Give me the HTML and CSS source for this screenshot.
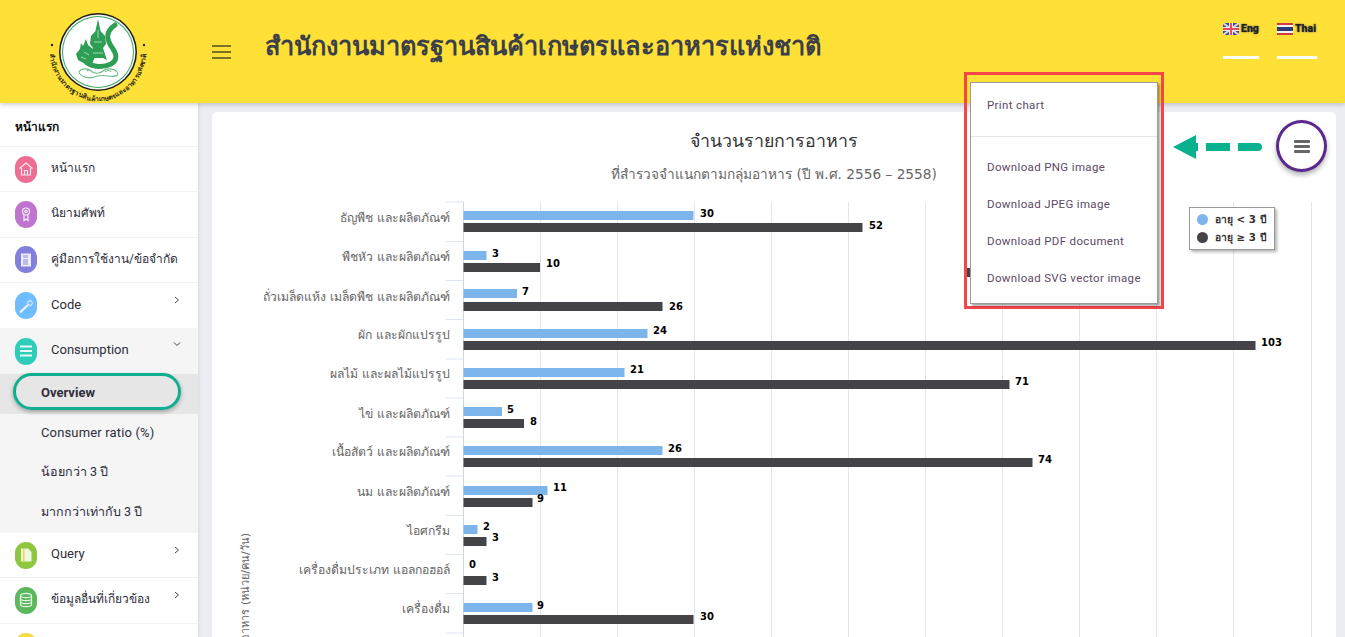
FILE: index.html
```html
<!DOCTYPE html>
<html lang="th">
<head>
<meta charset="utf-8">
<title>Overview</title>
<link rel="stylesheet" href="styles.css">
</head>
<body>
<header class="topbar">
  <div class="logo-cell">
    <svg class="logo" viewBox="0 0 110 97" width="110" height="97">
      <defs><path id="ring" d="M7 45 A48 50 0 0 0 103 45"/></defs>
      <circle cx="55" cy="46" r="39" fill="#1c1c14"/>
      <circle cx="55" cy="46" r="37.500" fill="#f6f6ee"/>
      <circle cx="55" cy="46" r="36" fill="#37a565"/>
      <circle cx="55" cy="46" r="35" fill="#fff"/>
      <path class="naga-line" d="M72 19C62 26 64 33 68 40C74 48 75 54 68 58C60 62 50 61 44 57"/>
      <path class="naga" d="M55 13l2.500 12 4.500 5 1 8-3 4 4 12-4-2H50l-4 2 4-12-3-4 1-8 4.500-5z"/>
      <path class="naga" d="M43 33l2 6 5 4 2 8-3 7-5 1-9-5-2-6 4-5 1-6 2 3z"/>
      <path class="naga-cut" d="M55 24v8M51 36h8M50 47h10M41 46l5 3M38 51l5 2"/>
      <path class="cloud" d="M36 66c2-4 9-4 12-1s9 3 12 0 11-3 14 1-3 5-9 4-10-1-14 1-14 0-15-5zM44 65c2-2 4-1 5 1M62 66c2-2 5-2 6 0"/>
      <circle cx="9" cy="39" r="1.200" fill="#222"/>
      <circle cx="101" cy="39" r="1.200" fill="#222"/>
      <text class="logo-text"><textPath href="#ring" startOffset="50%" text-anchor="middle">สำนักงานมาตรฐานสินค้าเกษตรและอาหารแห่งชาติ</textPath></text>
    </svg>
  </div>
  <button class="burger" aria-label="menu"><i></i><i></i><i></i></button>
  <h1 class="site-title">สำนักงานมาตรฐานสินค้าเกษตรและอาหารแห่งชาติ</h1>
  <nav class="langs">
    <a class="lang lang-en">
      <span class="lang-row">
        <svg width="16" height="12" viewBox="0 0 16 12"><rect width="16" height="12" fill="#34508f"/><path d="M0 0l16 12M16 0L0 12" stroke="#e6d5dc" stroke-width="2"/><path d="M8 0v12M0 6h16" stroke="#efe4e8" stroke-width="4"/><path d="M8 0v12M0 6h16" stroke="#dc4f66" stroke-width="2"/></svg>
        <b>Eng</b>
      </span>
    </a>
    <a class="lang lang-th">
      <span class="lang-row">
        <svg width="16" height="12" viewBox="0 0 16 12"><rect width="16" height="12" fill="#d13b44"/><rect y="2" width="16" height="8" fill="#f4f4f4"/><rect y="4" width="16" height="4" fill="#2d3a78"/></svg>
        <b>Thai</b>
      </span>
    </a>
  </nav>
</header>
<div class="shell">
  <aside class="sidebar">
    <div class="side-head">หน้าแรก</div>
    <a class="item line th"><span class="ic ic-pink"><svg viewBox="0 0 16 16" width="16" height="16"><path d="M1.500 7.500L8 2l6.500 5.500M3.500 7v7h9V7M6.500 14V9.500h3V14" /></svg></span><span class="lbl">หน้าแรก</span></a>
    <a class="item line th"><span class="ic ic-purple"><svg viewBox="0 0 16 16" width="16" height="16"><circle cx="8" cy="5.500" r="3.500"/><circle cx="8" cy="5.500" r="1.200"/><path d="M6 9v5.500l2-1.500 2 1.500V9"/></svg></span><span class="lbl">นิยามศัพท์</span></a>
    <a class="item line th"><span class="ic ic-indigo"><svg viewBox="0 0 16 16" width="16" height="16"><path class="fill" d="M3 1.500h10v13H3z"/><path class="cut" d="M5 3h5v3H5zM5 7h5v6H5z"/></svg></span><span class="lbl">คู่มือการใช้งาน/ข้อจำกัด</span></a>
    <a class="item"><span class="ic ic-blue"><svg viewBox="0 0 16 16" width="16" height="16"><path class="thick" d="M2 14.500L10 7"/><path d="M12 1.500v2M12 6.500v2M8.500 5h2M13.500 5h2M9.800 2.800l1 1M14.200 2.800l-1 1M9.800 7.200l1-1M14.200 7.200l-1-1"/></svg></span><span class="lbl">Code</span><svg class="chev" viewBox="0 0 8 8" width="8" height="8"><path d="M2 1l3.500 3L2 7"/></svg></a>
    <div class="group">
      <a class="item open"><span class="ic ic-teal"><svg viewBox="0 0 16 16" width="16" height="16"><path class="thick" d="M2 3.500h12M2 8h12M2 12.500h12"/></svg></span><span class="lbl">Consumption</span><svg class="chev chev-down" viewBox="0 0 8 8" width="8" height="8"><path d="M1 2.500l3 3 3-3"/></svg></a>
      <a class="sub sub-active">Overview</a>
      <a class="sub">Consumer ratio (%)</a>
      <a class="sub sub-th">น้อยกว่า 3 ปี</a>
      <a class="sub sub-th">มากกว่าเท่ากับ 3 ปี</a>
    </div>
    <a class="item line"><span class="ic ic-lime"><svg viewBox="0 0 16 16" width="16" height="16"><path class="fill" d="M3 1.500h7l3.500 3.500v9.500H3z"/><path class="amber" d="M5 1.500h1.500v13H5z"/></svg></span><span class="lbl">Query</span><svg class="chev" viewBox="0 0 8 8" width="8" height="8"><path d="M2 1l3.500 3L2 7"/></svg></a>
    <a class="item line th"><span class="ic ic-green"><svg viewBox="0 0 16 16" width="16" height="16"><ellipse cx="8" cy="3.500" rx="5.500" ry="2.200"/><path d="M2.500 3.500v9c0 1.200 2.500 2.200 5.500 2.200s5.500-1 5.500-2.200v-9M2.500 6.500c0 1.200 2.500 2.200 5.500 2.200s5.500-1 5.500-2.200M2.500 9.500c0 1.200 2.500 2.200 5.500 2.200s5.500-1 5.500-2.200"/></svg></span><span class="lbl">ข้อมูลอื่นที่เกี่ยวข้อง</span><svg class="chev" viewBox="0 0 8 8" width="8" height="8"><path d="M2 1l3.500 3L2 7"/></svg></a>
    <a class="item"><span class="ic ic-yellow"></span></a>
  </aside>
  <main class="content">
    <section class="card">
      <svg class="chart" viewBox="0 0 1124 525" width="1124" height="525">
        <g class="grid">
          <path d="M328.500 90V525"/><path d="M405.500 90V525"/><path d="M482.500 90V525"/><path d="M559.500 90V525"/><path d="M636.500 90V525"/><path d="M713.500 90V525"/><path d="M790.500 90V525"/><path d="M867.500 90V525"/><path d="M944.500 90V525"/><path d="M1021.500 90V525"/><path d="M1099.500 90V525"/>
        </g>
        <path class="axis" d="M251.500 90V525"/>
        <g class="ticks">
          <path d="M234 90h17M234 129.500h17M234 168.500h17M234 207.500h17M234 247h17M234 286h17M234 325h17M234 364h17M234 403.500h17M234 442.500h17M234 481.500h17M234 521h17"/>
        </g>
        <text class="ch-title" x="562" y="35" text-anchor="middle">จำนวนรายการอาหาร</text>
        <text class="ch-sub" x="562" y="67" text-anchor="middle">ที่สำรวจจำแนกตามกลุ่มอาหาร (ปี พ.ศ. 2556 – 2558)</text>
        <g class="cats" text-anchor="end">
          <text x="238" y="110">ธัญพืช และผลิตภัณฑ์</text>
          <text x="238" y="149">พืชหัว และผลิตภัณฑ์</text>
          <text x="238" y="189">ถั่วเมล็ดแห้ง เมล็ดพืช และผลิตภัณฑ์</text>
          <text x="238" y="227">ผัก และผักแปรรูป</text>
          <text x="238" y="266">ผลไม้ และผลไม้แปรรูป</text>
          <text x="238" y="306">ไข่ และผลิตภัณฑ์</text>
          <text x="238" y="344">เนื้อสัตว์ และผลิตภัณฑ์</text>
          <text x="238" y="384">นม และผลิตภัณฑ์</text>
          <text x="238" y="423">ไอศกรีม</text>
          <text x="238" y="462">เครื่องดื่มประเภท แอลกอฮอล์</text>
          <text x="238" y="501">เครื่องดื่ม</text>
        </g>
        <text class="y-title" text-anchor="end" transform="translate(37 421) rotate(-90)">ปริมาณอาหาร (หน่วย/คน/วัน)</text>
        <g class="b1">
          <rect x="251.500" y="99" width="230" height="9"/>
          <rect x="251.500" y="139" width="23" height="9"/>
          <rect x="251.500" y="177" width="53.500" height="9"/>
          <rect x="251.500" y="217" width="184" height="9"/>
          <rect x="251.500" y="256" width="161" height="9"/>
          <rect x="251.500" y="295" width="38.500" height="9"/>
          <rect x="251.500" y="334" width="199" height="9"/>
          <rect x="251.500" y="374" width="84" height="9"/>
          <rect x="251.500" y="413" width="14" height="9"/>
          <rect x="251.500" y="491" width="69" height="9"/>
        </g>
        <g class="b2">
          <rect x="251.500" y="111" width="399" height="9"/>
          <rect x="251.500" y="151" width="76.500" height="9"/>
          <rect x="251.500" y="190" width="199" height="9"/>
          <rect x="251.500" y="229" width="792" height="9"/>
          <rect x="251.500" y="268" width="546" height="9"/>
          <rect x="251.500" y="307" width="60.500" height="9"/>
          <rect x="251.500" y="346" width="569" height="9"/>
          <rect x="251.500" y="386" width="69" height="9"/>
          <rect x="251.500" y="425" width="23" height="9"/>
          <rect x="251.500" y="464" width="23" height="9"/>
          <rect x="251.500" y="503" width="230" height="9"/>
          <rect x="754" y="156" width="4" height="9"/>
        </g>
        <g class="vals">
          <text x="488" y="105">30</text><text x="657" y="117">52</text>
          <text x="280" y="145">3</text><text x="334" y="155">10</text>
          <text x="310" y="183">7</text><text x="457" y="198">26</text>
          <text x="441" y="222">24</text><text x="1049" y="234">103</text>
          <text x="418" y="261">21</text><text x="803" y="273">71</text>
          <text x="295" y="301">5</text><text x="318" y="313">8</text>
          <text x="456" y="340">26</text><text x="826" y="351">74</text>
          <text x="341" y="379">11</text><text x="325" y="390">9</text>
          <text x="271" y="418">2</text><text x="280" y="429">3</text>
          <text x="257" y="456">0</text><text x="280" y="469">3</text>
          <text x="325" y="497">9</text><text x="488" y="508">30</text>
        </g>
      </svg>
      <div class="legend">
        <div class="leg-row"><i class="dot dot-blue"></i>อายุ &lt; 3 ปี</div>
        <div class="leg-row"><i class="dot dot-dark"></i>อายุ ≥ 3 ปี</div>
      </div>
      <svg class="arrow" viewBox="0 0 92 24" width="92" height="24"><path d="M1 12L24 0v24zM24 8h2v8h-2zM34 8h24v8H34zM66 8h20a4 4 0 0 1 0 8H66z"/></svg>
      <button class="chart-menu" aria-label="chart menu"><i></i><i></i><i></i></button>
    </section>
  </main>
</div>
<div class="menu-frame">
  <ul class="menu">
    <li class="print">Print chart</li>
    <li class="sep"></li>
    <li>Download PNG image</li>
    <li>Download JPEG image</li>
    <li>Download PDF document</li>
    <li>Download SVG vector image</li>
  </ul>
</div>
</body>
</html>
```
FILE: styles.css
```css
* { box-sizing: border-box; }
html, body { margin: 0; height: 637px; overflow: hidden; }
body { background: #ebedf3; font-family: Roboto, "Noto Sans", sans-serif; color: #2b2b35; position: relative; }
.topbar { height: 103px; background: #ffe037; display: flex; align-items: flex-start; box-shadow: 0 2px 4px rgba(0,0,0,.18); position: relative; z-index: 2; }
.logo-cell { width: 198px; padding: 6px 0 0 43px; }
.logo { display: block; overflow: visible; }
.naga { fill: #2f9e55; }
.naga-line { fill: none; stroke: #2f9e55; stroke-width: 5; stroke-linecap: round; }
.naga-cut { fill: none; stroke: #bfe3cb; stroke-width: .8; }
.cloud { fill: none; stroke: #6dbd8a; stroke-width: 1.100; }
.logo-text { font-size: 6.600px; fill: #2a2a12; font-weight: 700; }
.burger { border: 0; background: none; padding: 0; margin: 45px 0 0 14px; width: 19px; display: flex; flex-direction: column; gap: 4px; }
.burger i { display: block; height: 2px; background: #7d7220; }
.site-title { margin: 27px 0 0 34px; font-size: 25.400px; font-weight: 700; line-height: 38px; color: #3b3f4a; white-space: nowrap; }
.langs { margin-left: auto; margin-right: 28px; padding-top: 22px; display: flex; gap: 18px; }
.lang { display: block; height: 37px; border-bottom: 3px solid #fff; }
.lang-en { width: 36px; }
.lang-th { width: 40px; }
.lang-row { display: flex; align-items: center; gap: 2px; font-size: 10.500px; color: #222; }
.lang-row b { font-weight: 900; text-shadow: 0 0 2px #555; }
.shell { display: flex; height: 534px; }
.sidebar { width: 198px; background: #fff; flex: none; box-shadow: 1px 0 3px rgba(0,0,0,.08); font-size: 13px; overflow: hidden; }
.side-head { height: 44px; display: flex; align-items: center; padding: 4px 0 0 15px; font-weight: 700; font-size: 12px; color: #111; border-bottom: 1px solid #f2f2f4; }
.item { height: 45.300px; display: flex; align-items: center; padding-left: 15px; gap: 14px; color: #2e2e3a; position: relative; }
.lbl { margin-top: -3px; }
.th { font-size: 12px; }
.line { border-bottom: 1px solid #f2f2f4; }
.open { background: #f5f5f6; height: 46px; }
.group { background: #f5f5f6; }
.ic { width: 22px; height: 27px; border-radius: 11px; flex: none; display: flex; align-items: center; justify-content: center; }
.ic svg { fill: none; stroke: rgba(255,255,255,.85); stroke-width: 1.200; }
.ic .thick { stroke-width: 2; stroke: rgba(255,255,255,.9); }
.ic .fill { fill: rgba(255,255,255,.85); stroke: none; }
.ic .cut { fill: #8380dd; stroke: none; opacity: .45; }
.ic .amber { fill: #f1d54a; stroke: none; }
.ic-pink { background: #ee6d92; }
.ic-purple { background: #bf75cf; }
.ic-indigo { background: #8380dd; }
.ic-blue { background: #6fbdff; }
.ic-teal { background: #2ecdb9; }
.ic-lime { background: #8dc63f; }
.ic-green { background: #5cb85c; }
.ic-yellow { background: #f2dc47; }
.chev { position: absolute; right: 17px; top: 13px; fill: none; stroke: #444; stroke-width: 1; }
.chev-down { top: 12px; }
.sub { display: flex; align-items: center; height: 39.700px; padding: 0 0 3px 41px; font-size: 13px; letter-spacing: .15px; color: #2e2e3a; position: relative; }
.sub-th { font-size: 12.500px; letter-spacing: 0; }
.sub-active { background: #e6e6e7; font-weight: 700; letter-spacing: 0; }
.sub-active::before { content: ""; position: absolute; left: 13px; top: -1px; width: 162px; height: 31px; border: 3px solid #0fae90; border-radius: 19px; box-shadow: 0 2px 4px rgba(0,0,0,.3); }
.content { flex: 1; padding: 9px 9px 0 14px; min-width: 0; }
.card { background: #fff; height: 540px; border-radius: 5px; position: relative; overflow: hidden; }
.chart { display: block; font-family: "DejaVu Sans", sans-serif; }
.grid path { stroke: #e6e6ea; stroke-width: 1; fill: none; }
.axis { stroke: #ccd6eb; stroke-width: 1; fill: none; }
.ticks path { stroke: #dfe4f1; stroke-width: 1; fill: none; }
.ch-title { font-size: 17.800px; fill: #333; }
.ch-sub { font-size: 13.700px; fill: #666; }
.cats text { font-size: 12.200px; fill: #666; }
.y-title { font-size: 11px; fill: #666; }
.b1 rect { fill: #7cb5ec; }
.b2 rect { fill: #434348; }
.vals text { font-size: 10px; font-weight: 700; fill: #000; }
.legend { position: absolute; left: 977px; top: 95px; width: 86px; height: 43px; background: #fff; border: 1px solid #999; box-shadow: 2px 2px 3px rgba(0,0,0,.3); padding: 3px 0 0 7px; font-family: "DejaVu Sans", sans-serif; font-size: 10.300px; font-weight: 700; color: #333; }
.leg-row { display: flex; align-items: center; gap: 7px; height: 17.500px; white-space: nowrap; }
.dot { width: 11px; height: 11px; border-radius: 50%; flex: none; }
.dot-blue { background: #7cb5ec; }
.dot-dark { background: #434348; }
.arrow { position: absolute; left: 960px; top: 23px; }
.arrow path { fill: #0bb18f; }
.chart-menu { position: absolute; left: 1064px; top: 8px; width: 51px; height: 52px; border: 3px solid #5b2a8c; border-radius: 50%; background: #fff; box-shadow: 0 3px 5px rgba(0,0,0,.3); display: flex; flex-direction: column; align-items: center; justify-content: center; gap: 2px; padding: 0; }
.chart-menu i { width: 16px; height: 3px; background: #666; border-radius: 1px; display: block; }
.menu-frame { position: absolute; left: 964px; top: 72px; width: 200px; height: 237px; border: 3px solid #f44549; padding: 7px 4px 0 3px; z-index: 5; }
.menu { list-style: none; margin: 0; padding: 0; width: 188px; height: 222px; background: #fff; border: 1px solid #999; box-shadow: 2px 2px 2px rgba(0,0,0,.35); font-size: 11.500px; color: #5b4a66; letter-spacing: .35px; }
.menu li { height: 37px; padding-left: 16px; display: flex; align-items: center; }
.menu .print { height: 53px; padding-bottom: 9px; }
.menu .sep { height: 1px; padding: 0; background: #e6e6ea; margin-bottom: 11px; }
```
